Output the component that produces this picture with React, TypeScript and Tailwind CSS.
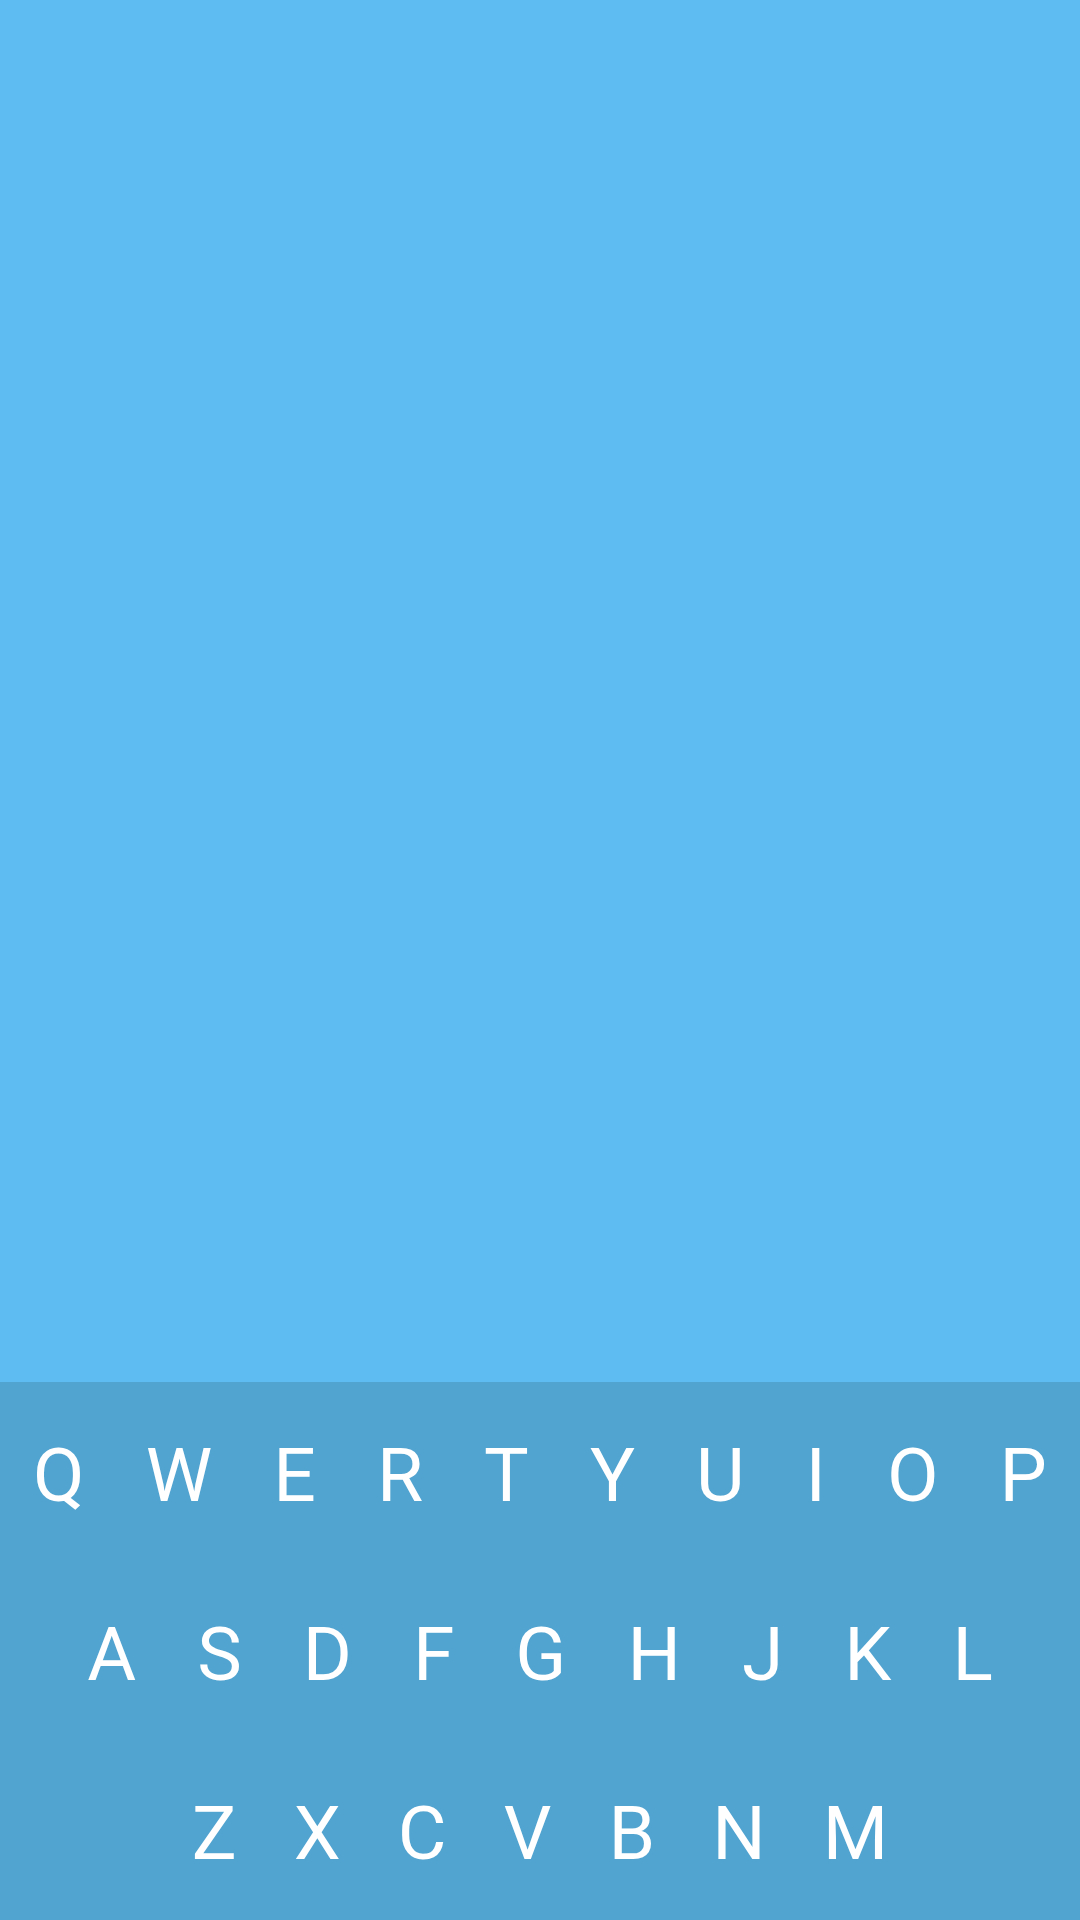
import React from 'react';

const rows: { keys: string[]; gap: string }[] = [
    { keys: ['Q', 'W', 'E', 'R', 'T', 'Y', 'U', 'I', 'O', 'P'], gap: 'gap-[61px]' },
    { keys: ['A', 'S', 'D', 'F', 'G', 'H', 'J', 'K', 'L'], gap: 'gap-[61px]' },
    { keys: ['Z', 'X', 'C', 'V', 'B', 'N', 'M'], gap: 'gap-[57px]' },
];

const App: React.FC = () => {
    return (
        <div className="w-[1080px] h-[1920px] flex flex-col bg-[#5ebcf3] font-['Roboto',sans-serif]">
            {/* empty canvas */}
            <div className="h-[1382px] shrink-0" />

            {/* keyboard */}
            <div className="flex-1 flex flex-col bg-[#51a3d0]">
                {rows.map((row, i) => (
                    <div key={i} className={`h-[179px] flex justify-center pt-[49px] ${row.gap}`}>
                        {row.keys.map(k => (
                            <span key={k} className="text-[75px] leading-[88px] text-white font-normal">
                                {k}
                            </span>
                        ))}
                    </div>
                ))}
            </div>
        </div>
    );
};

export default App;
